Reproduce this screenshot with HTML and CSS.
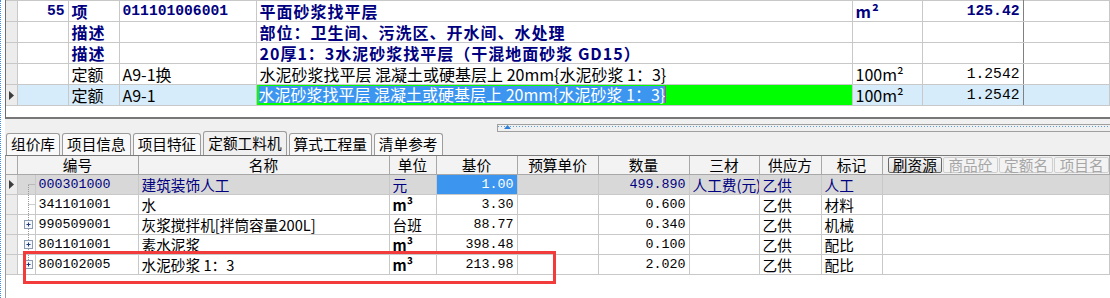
FILE: index.html
```html
<!DOCTYPE html>
<html lang="zh-CN">

<head>
    <meta charset="UTF-8" />
    <title>定额工料机</title>
    <link rel="stylesheet" href="styles.css">
</head>

<body>
    <div class="screen">

        <!-- 清单/定额 上半部分 -->
        <div class="top-panel">
            <table class="grid qd">
                <colgroup>
                    <col class="w-rh"><col class="w-no"><col class="w-kind"><col class="w-code">
                    <col class="w-name"><col class="w-unit"><col class="w-qty"><col>
                </colgroup>
                <tr class="bold">
                    <td class="rh"></td>
                    <td class="r"><span class="mono">55</span></td>
                    <td>项</td>
                    <td><span class="mono">011101006001</span></td>
                    <td>平面砂浆找平层</td>
                    <td>m²</td>
                    <td class="r dark"><span class="mono">125.42</span></td>
                    <td></td>
                </tr>
                <tr class="bold">
                    <td class="rh"></td>
                    <td></td>
                    <td>描述</td>
                    <td></td>
                    <td>部位：卫生间、污洗区、开水间、水处理</td>
                    <td></td>
                    <td class="dark"></td>
                    <td></td>
                </tr>
                <tr class="bold">
                    <td class="rh"></td>
                    <td></td>
                    <td>描述</td>
                    <td></td>
                    <td>20厚1：3水泥砂浆找平层（干混地面砂浆 GD15）</td>
                    <td></td>
                    <td class="dark"></td>
                    <td></td>
                </tr>
                <tr>
                    <td class="rh"></td>
                    <td></td>
                    <td>定额</td>
                    <td>A9-1换</td>
                    <td>水泥砂浆找平层 混凝土或硬基层上 20mm{水泥砂浆 1：3}</td>
                    <td>100m²</td>
                    <td class="r dark"><span class="mono">1.2542</span></td>
                    <td></td>
                </tr>
                <tr class="current">
                    <td class="rh"><svg width="5" height="9" viewBox="0 0 5 9"><path d="M0 0 L5 4.5 L0 9 Z" fill="#3c3c3c"/></svg></td>
                    <td></td>
                    <td>定额</td>
                    <td>A9-1</td>
                    <td class="hl"><span class="sel">水泥砂浆找平层 混凝土或硬基层上 20mm{水泥砂浆 1：3}</span></td>
                    <td>100m²</td>
                    <td class="r dark"><span class="mono">1.2542</span></td>
                    <td></td>
                </tr>
            </table>
        </div>

        <div class="splitter">
            <div class="splitter-bar">
                <svg class="up" width="7" height="4" viewBox="0 0 7 4"><path d="M0 4 L3.5 0 L7 4 Z" fill="#2f7fd8"/></svg>
            </div>
        </div>

        <div class="tabs">
            <div class="tab">组价库</div>
            <div class="tab">项目信息</div>
            <div class="tab">项目特征</div>
            <div class="tab active">定额工料机</div>
            <div class="tab">算式工程量</div>
            <div class="tab">清单参考</div>
        </div>

        <!-- 工料机明细 -->
        <div class="bottom-panel">
            <table class="grid glj">
                <colgroup>
                    <col class="w-rh"><col class="w-tree"><col class="w-code2"><col class="w-name2">
                    <col class="w-unit2"><col class="w-price"><col class="w-price"><col class="w-num">
                    <col class="w-sc"><col class="w-sup"><col class="w-mark"><col>
                </colgroup>
                <tr class="head">
                    <th class="rh"></th>
                    <th colspan="2">编号</th>
                    <th>名称</th>
                    <th>单位</th>
                    <th>基价</th>
                    <th>预算单价</th>
                    <th>数量</th>
                    <th>三材</th>
                    <th>供应方</th>
                    <th>标记</th>
                    <th class="tools">
                        <div class="btns">
                            <span class="btn">刷资源</span>
                            <span class="btn off">商品砼</span>
                            <span class="btn off">定额名</span>
                            <span class="btn off">项目名</span>
                        </div>
                    </th>
                </tr>
                <tr class="current">
                    <td class="rh"><svg width="5" height="9" viewBox="0 0 5 9"><path d="M0 0 L5 4.5 L0 9 Z" fill="#3c3c3c"/></svg></td>
                    <td class="tree"><svg width="18" height="19" viewBox="0 0 18 19"><path d="M10.5 10 V19 M10.5 9.5 H18" stroke="#9a9a9a" stroke-dasharray="1 1" fill="none"/></svg></td>
                    <td><span class="mono">000301000</span></td>
                    <td>建筑装饰人工</td>
                    <td>元</td>
                    <td class="r dark sel"><span class="mono">1.00</span></td>
                    <td></td>
                    <td class="r"><span class="mono">499.890</span></td>
                    <td>人工费(元)</td>
                    <td>乙供</td>
                    <td>人工</td>
                    <td></td>
                </tr>
                <tr>
                    <td class="rh"></td>
                    <td class="tree"><svg width="18" height="19" viewBox="0 0 18 19"><path d="M10.5 0 V19 M10.5 9.5 H18" stroke="#9a9a9a" stroke-dasharray="1 1" fill="none"/></svg></td>
                    <td><span class="mono">341101001</span></td>
                    <td>水</td>
                    <td class="unit">m³</td>
                    <td class="r dark"><span class="mono">3.30</span></td>
                    <td></td>
                    <td class="r"><span class="mono">0.600</span></td>
                    <td></td>
                    <td>乙供</td>
                    <td>材料</td>
                    <td></td>
                </tr>
                <tr>
                    <td class="rh"></td>
                    <td class="tree"><svg width="18" height="19" viewBox="0 0 18 19"><path d="M10.5 0 V5 M10.5 14 V19" stroke="#9a9a9a" stroke-dasharray="1 1" fill="none"/><rect x="6.5" y="5.5" width="8" height="8" fill="#f4f6fa" stroke="#8a9ab0"/><path d="M8.5 9.5 H12.5 M10.5 7.5 V11.5" stroke="#203a7a"/></svg></td>
                    <td><span class="mono">990509001</span></td>
                    <td>灰浆搅拌机[拌筒容量200L]</td>
                    <td>台班</td>
                    <td class="r dark"><span class="mono">88.77</span></td>
                    <td></td>
                    <td class="r"><span class="mono">0.340</span></td>
                    <td></td>
                    <td>乙供</td>
                    <td>机械</td>
                    <td></td>
                </tr>
                <tr>
                    <td class="rh"></td>
                    <td class="tree"><svg width="18" height="19" viewBox="0 0 18 19"><path d="M10.5 0 V5 M10.5 14 V19" stroke="#9a9a9a" stroke-dasharray="1 1" fill="none"/><rect x="6.5" y="5.5" width="8" height="8" fill="#f4f6fa" stroke="#8a9ab0"/><path d="M8.5 9.5 H12.5 M10.5 7.5 V11.5" stroke="#203a7a"/></svg></td>
                    <td><span class="mono">801101001</span></td>
                    <td>素水泥浆</td>
                    <td class="unit">m³</td>
                    <td class="r dark"><span class="mono">398.48</span></td>
                    <td></td>
                    <td class="r"><span class="mono">0.100</span></td>
                    <td></td>
                    <td>乙供</td>
                    <td>配比</td>
                    <td></td>
                </tr>
                <tr>
                    <td class="rh"></td>
                    <td class="tree"><svg width="18" height="19" viewBox="0 0 18 19"><path d="M10.5 0 V5" stroke="#9a9a9a" stroke-dasharray="1 1" fill="none"/><rect x="6.5" y="5.5" width="8" height="8" fill="#f4f6fa" stroke="#8a9ab0"/><path d="M8.5 9.5 H12.5 M10.5 7.5 V11.5" stroke="#203a7a"/></svg></td>
                    <td><span class="mono">800102005</span></td>
                    <td>水泥砂浆 1：3</td>
                    <td class="unit">m³</td>
                    <td class="r dark"><span class="mono">213.98</span></td>
                    <td></td>
                    <td class="r"><span class="mono">2.020</span></td>
                    <td></td>
                    <td>乙供</td>
                    <td>配比</td>
                    <td></td>
                </tr>
            </table>
        </div>

        <!-- 红框标注 -->
        <div class="mark-box"></div>
    </div>
</body>

</html>
```

FILE: styles.css
```css
* {
    box-sizing: border-box;
    margin: 0;
    padding: 0;
}

body {
    width: 1110px;
    height: 298px;
    overflow: hidden;
    background: #fff;
    color: #000;
    font-family: "Noto Sans CJK SC", sans-serif;
}

.screen {
    position: relative;
    height: 298px;
    border-left: 1px dotted #3b8fe6;
    padding-left: 4px;
}

/* 表格通用 */
.grid {
    border-collapse: collapse;
    table-layout: fixed;
    width: 100%;
}

.grid td,
.grid th {
    border: 1px solid #c8c8c8;
    white-space: nowrap;
    overflow: hidden;
    padding: 0 3px;
    text-align: left;
    font-weight: normal;
    vertical-align: middle;
}

.grid .r {
    text-align: right;
}

.grid .rh {
    background: #ececec;
    border-left: none;
    padding: 0;
    text-align: center;
}

.grid .rh svg {
    display: block;
    margin: 0 auto;
}

.mono {
    font-family: "Liberation Mono", monospace;
    vertical-align: top;
}

/* 上半部分 */
.top-panel {
    height: 119px;
    border-left: 1px solid #6e6e6e;
    border-bottom: 2px solid #777;
    background: #fff;
}

.qd {
    font-size: 16px;
}

.qd td {
    height: 21px;
    line-height: 18px;
}

.qd .mono {
    font-size: 14.67px;
    line-height: 18px;
}

.qd .w-rh { width: 11px; }
.qd .w-no { width: 51px; }
.qd .w-kind { width: 51px; }
.qd .w-code { width: 137px; }
.qd .w-name { width: 596px; }
.qd .w-unit { width: 70px; }
.qd .w-qty { width: 101px; }

.qd .bold td {
    color: #000080;
    font-weight: bold;
    letter-spacing: 1px;
}

.qd .bold .mono {
    letter-spacing: 0;
}

.qd .dark {
    border-right-color: #808080;
}

.qd .current td {
    background: #d6ecfa;
}

.qd .current .rh {
    background: #ececec;
}

.qd td.hl {
    background: #00ff00;
    padding: 0 0 0 2px;
}

.qd .sel {
    display: inline-block;
    vertical-align: top;
    background: #3c96f0;
    color: #fff;
    line-height: 17px;
    height: 17px;
    border-right: 1px solid #c05050;
}

/* 分隔条 */
.splitter {
    height: 13px;
    background: #f0f0f0;
    padding: 5px 0 0 492px;
}

.splitter-bar {
    height: 8px;
    border: 1px solid #a0a0a0;
    border-right: none;
    display: flex;
    align-items: center;
    padding-left: 6px;
    background-image: linear-gradient(to right, #5a9be0 1px, transparent 1px);
    background-size: 3px 1px;
    background-repeat: repeat-x;
    background-position: 0 1px;
}

.splitter-bar .up {
    display: block;
    margin-top: -3px;
}

/* 页签 */
.tabs {
    height: 23px;
    background: #f0f0f0;
    display: flex;
    align-items: flex-end;
    gap: 2px;
    padding-left: 1px;
}

.tab {
    height: 22px;
    padding: 0 4px;
    border: 1px solid #9c9c9c;
    border-bottom: none;
    border-radius: 3px 3px 0 0;
    background: #f9f9f9;
    font-size: 14.67px;
    line-height: 20px;
}

.tab.active {
    height: 24px;
    background: #f0f0f0;
    line-height: 22px;
}

/* 工料机表 */
.bottom-panel {
    height: 143px;
    border-left: 1px solid #9a9a9a;
    border-top: 1px solid #7a7a7a;
    background: #fff;
}

.glj {
    font-size: 14.67px;
}

.glj td,
.glj th {
    height: 20px;
    line-height: 17px;
}

.glj .mono {
    font-size: 13.33px;
    line-height: 17px;
}

.glj .w-rh { width: 11px; }
.glj .w-tree { width: 18px; }
.glj .w-code2 { width: 103px; }
.glj .w-name2 { width: 251px; }
.glj .w-unit2 { width: 47px; }
.glj .w-price { width: 81px; }
.glj .w-num { width: 91px; }
.glj .w-sc { width: 70px; }
.glj .w-sup { width: 62px; }
.glj .w-mark { width: 61px; }

.glj .head th {
    height: 18px;
    line-height: 16px;
    background: #f3f3f3;
    border-color: #a8a8a8;
    border-top: none;
    text-align: center;
}

.glj .head .rh {
    background: #f3f3f3;
}

.glj .head .tools {
    background: #f0f0f0;
    padding: 0 0 0 5px;
    text-align: left;
}

.btns {
    display: flex;
    gap: 1px;
}

.btn {
    display: block;
    width: 56px;
    height: 16px;
    line-height: 14px;
    text-align: center;
    border: 1px solid #6a6a6a;
    border-radius: 2px;
    background: linear-gradient(#f6f6f6, #dedede);
    font-size: 14.67px;
}

.btn.off {
    border-color: #cfcfcf;
    color: #a6a6a6;
    background: #f3f3f3;
}

.glj td.tree {
    padding: 0;
    background: #fff;
}

.glj td.tree svg {
    display: block;
}

.glj .current td {
    background: #d8d8d8;
    color: #000080;
}

.glj .current .rh {
    background: #ececec;
}

.glj .current td.sel {
    background: #3c96f0;
    color: #fff;
}

.glj .dark {
    border-left-color: #808080;
}

.glj .unit {
    font-weight: bold;
}

/* 标注框 */
.mark-box {
    position: absolute;
    left: 22px;
    top: 251px;
    width: 533px;
    height: 33px;
    border: 3px solid #f23c3c;
}
```
